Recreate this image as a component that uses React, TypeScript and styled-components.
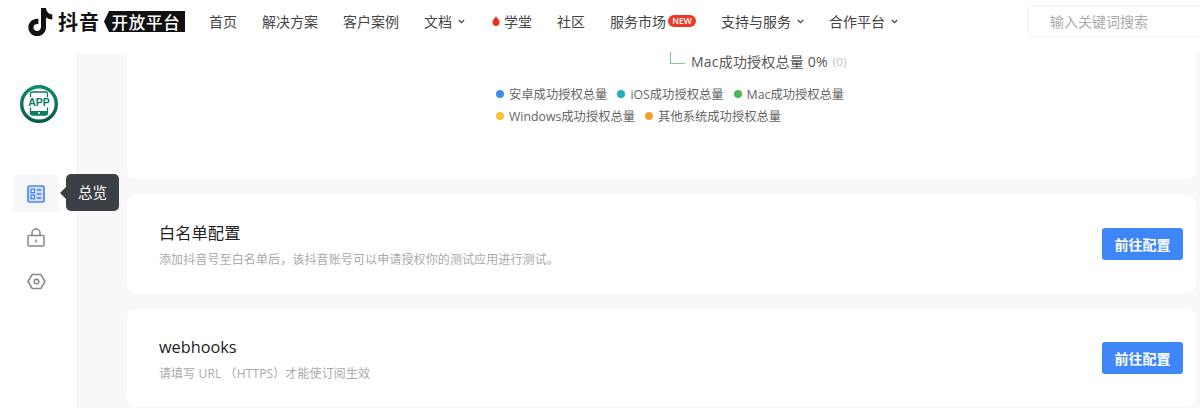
import styled, { createGlobalStyle } from "styled-components";

const GlobalStyle = createGlobalStyle`
  html, body {
    margin: 0;
    padding: 0;
    background: #fff;
    overflow: hidden;
  }
  * {
    box-sizing: border-box;
  }
`;

const FONT = `"Open Sans", "Noto Sans CJK SC", "Noto Sans", sans-serif`;

const navItems = [
  { label: "首页" },
  { label: "解决方案" },
  { label: "客户案例" },
  { label: "文档", arrow: true },
  { label: "学堂", flame: true },
  { label: "社区" },
  { label: "服务市场", badge: "NEW" },
  { label: "支持与服务", arrow: true },
  { label: "合作平台", arrow: true },
];

const legendRows = [
  [
    { color: "#3b8cf0", label: "安卓成功授权总量" },
    { color: "#22aebf", label: "iOS成功授权总量" },
    { color: "#4cb85c", label: "Mac成功授权总量" },
  ],
  [
    { color: "#f3c237", label: "Windows成功授权总量" },
    { color: "#f5a033", label: "其他系统成功授权总量" },
  ],
];

const DouyinMark = () => (
  <svg width="25" height="28" viewBox="0 0 25 28" aria-hidden="true">
    <path
      fill="#111"
      d="M13 0h5c.3 3.6 2.6 6 6.3 6.4v5c-2.400 0-4.500-.7-6.300-2v9.800c0 5.200-3.900 8.800-8.800 8.800C4.200 28 .4 24.200.4 19.400c0-5.300 4.500-9.300 10-8.500v5.200c-2.600-.7-5 1-5 3.400 0 2 1.700 3.500 3.800 3.500 2.200 0 3.800-1.500 3.800-3.900z"
    />
  </svg>
);

const Chevron = () => (
  <ChevronSvg width="7" height="5" viewBox="0 0 7 5" aria-hidden="true">
    <path d="M.8 1l2.700 2.700L6.200 1" fill="none" stroke="#444" strokeWidth="1.200" />
  </ChevronSvg>
);

const Flame = () => (
  <FlameSvg width="8" height="10" viewBox="0 0 8 10" aria-hidden="true">
    <path
      fill="#e8321f"
      d="M4 0c.4 1.600 3.600 3.400 3.600 6.200C7.600 8.400 6 10 4 10S.4 8.400.4 6.200C.4 3.800 3.400 2.200 4 0z"
    />
  </FlameSvg>
);

const AppLogo = () => (
  <svg width="38" height="38" viewBox="0 0 38 38" aria-hidden="true">
    <defs>
      <linearGradient id="appRing" x1="0" y1="0" x2="0" y2="1">
        <stop offset="0" stopColor="#0f8a6c" />
        <stop offset="1" stopColor="#075c49" />
      </linearGradient>
    </defs>
    <circle cx="19" cy="19" r="17.300" fill="#fff" stroke="url(#appRing)" strokeWidth="3.400" />
    <rect x="10.500" y="7" width="17" height="23" rx="1.800" fill="none" stroke="#0d7a62" strokeWidth="1.300" />
    <path d="M10.500 26h17v2.200a1.800 1.800 0 0 1-1.800 1.800H12.300a1.800 1.800 0 0 1-1.800-1.800z" fill="#0d7a62" />
    <circle cx="19" cy="28" r="1" fill="#fff" />
    <rect x="7.500" y="12" width="23" height="10.500" fill="#fff" />
    <text x="19" y="21" textAnchor="middle" fontSize="10.500" fontWeight="700" fontFamily="Liberation Sans, sans-serif" fill="#0d7a62">
      APP
    </text>
  </svg>
);

const OverviewIcon = () => (
  <svg width="18" height="18" viewBox="0 0 18 18" aria-hidden="true">
    <rect x="1" y="1" width="16" height="16" rx="1.500" fill="#cfe0fb" stroke="#4a8bec" strokeWidth="1.700" />
    <rect x="4" y="4.300" width="3.400" height="3.400" fill="#fff" stroke="#3f80e6" strokeWidth="1.300" />
    <rect x="4" y="10.300" width="3.400" height="3.400" fill="#fff" stroke="#3f80e6" strokeWidth="1.300" />
    <path d="M9.800 5h4.400M9.800 9h4.400M9.800 13h4.400" stroke="#3f80e6" strokeWidth="1.400" />
  </svg>
);

const LockIcon = () => (
  <svg width="18" height="19" viewBox="0 0 18 19" aria-hidden="true">
    <path d="M5 7.500V5a4 4 0 0 1 8 0v2.500" fill="none" stroke="#888" strokeWidth="1.500" />
    <rect x="1" y="7.500" width="16" height="10.500" rx="1.200" fill="none" stroke="#888" strokeWidth="1.500" />
    <path d="M9 11.500v3" stroke="#888" strokeWidth="1.500" />
  </svg>
);

const HexIcon = () => (
  <svg width="19" height="17" viewBox="0 0 19 17" aria-hidden="true">
    <path d="M5.200 1.500h8.600l4.200 7-4.200 7H5.200L1 8.500z" fill="none" stroke="#888" strokeWidth="1.500" strokeLinejoin="round" />
    <circle cx="9.500" cy="8.500" r="2.300" fill="none" stroke="#888" strokeWidth="1.500" />
  </svg>
);

const ConfigCard = ({ title, desc }: { title: string; desc: string }) => (
  <Card>
    <div>
      <CardTitle>{title}</CardTitle>
      <CardDesc>{desc}</CardDesc>
    </div>
    <PrimaryButton>前往配置</PrimaryButton>
  </Card>
);

export default function App() {
  return (
    <Page>
      <GlobalStyle />
      <Header>
        <Logo>
          <DouyinMark />
          <LogoName>抖音</LogoName>
          <LogoTag>开放平台</LogoTag>
        </Logo>
        <Nav>
          {navItems.map((item) => (
            <NavItem key={item.label}>
              {item.flame && <Flame />}
              {item.label}
              {item.badge && <NewBadge>{item.badge}</NewBadge>}
              {item.arrow && <Chevron />}
            </NavItem>
          ))}
        </Nav>
        <Search>输入关键词搜索</Search>
      </Header>
      <Body>
        <Sidebar>
          <AppLogo />
          <SideMenu>
            <SideItem $active>
              <OverviewIcon />
              <Tooltip>总览</Tooltip>
            </SideItem>
            <SideItem>
              <LockIcon />
            </SideItem>
            <SideItem>
              <HexIcon />
            </SideItem>
          </SideMenu>
        </Sidebar>
        <Content>
          <ChartCard>
            <ChartLabel>
              <LabelLine />
              Mac成功授权总量 0%
              <LabelCount>(0)</LabelCount>
            </ChartLabel>
            <Legend>
              {legendRows.map((row, i) => (
                <LegendRow key={i}>
                  {row.map((entry) => (
                    <LegendItem key={entry.label}>
                      <LegendDot $color={entry.color} />
                      {entry.label}
                    </LegendItem>
                  ))}
                </LegendRow>
              ))}
            </Legend>
          </ChartCard>
          <ConfigCard title="白名单配置" desc="添加抖音号至白名单后，该抖音账号可以申请授权你的测试应用进行测试。" />
          <ConfigCard title="webhooks" desc="请填写 URL （HTTPS）才能使订阅生效" />
        </Content>
      </Body>
    </Page>
  );
}

const Page = styled.div`
  width: 1200px;
  height: 408px;
  overflow: hidden;
  display: flex;
  flex-direction: column;
  background: #fff;
  font-family: ${FONT};
`;

const Header = styled.header`
  height: 53px;
  flex: none;
  display: flex;
  align-items: center;
  padding: 0 0 10px 28px;
  background: #fff;
`;

const Logo = styled.div`
  display: flex;
  align-items: center;
  width: 181px;
`;

const LogoName = styled.span`
  margin-left: 5px;
  font-size: 20px;
  font-weight: 700;
  letter-spacing: 1px;
  color: #111;
`;

const LogoTag = styled.span`
  margin-left: 4px;
  height: 21px;
  width: 81px;
  flex: none;
  display: flex;
  align-items: center;
  justify-content: center;
  padding-left: 3px;
  background: #111;
  color: #fff;
  font-size: 16.500px;
  font-weight: 500;
  letter-spacing: 0.700px;
  clip-path: polygon(5px 0, 100% 0, 100% 100%, 5px 100%, 0 50%);
`;

const Nav = styled.nav`
  display: flex;
  align-items: center;
  gap: 25px;
  width: 819px;
  margin-bottom: 2px;
`;

const NavItem = styled.div`
  display: flex;
  align-items: center;
  gap: 4px;
  font-size: 14px;
  color: #444;
  white-space: nowrap;
`;

const ChevronSvg = styled.svg`
  margin: 2px 0 0 2px;
`;

const FlameSvg = styled.svg`
  margin: 1px 0 0 2px;
`;

const NewBadge = styled.span`
  height: 12px;
  width: 28px;
  margin-left: -2px;
  display: flex;
  align-items: center;
  justify-content: center;
  border-radius: 6px;
  background: #ee3a24;
  color: #fff;
  font-size: 8.500px;
  font-weight: 600;
`;

const Search = styled.div`
  width: 172px;
  height: 32px;
  margin-bottom: 1px;
  padding-left: 21px;
  display: flex;
  align-items: center;
  border: 1px solid #f2f2f2;
  border-right: none;
  border-radius: 4px 0 0 4px;
  font-size: 14px;
  color: #aaa;
  white-space: nowrap;
`;

const Body = styled.div`
  flex: 1;
  display: flex;
  min-height: 0;
`;

const Sidebar = styled.aside`
  width: 78px;
  flex: none;
  padding: 32px 0 0 20px;
  background: #fff;
  border-right: 1px solid #f0f0f0;
`;

const SideMenu = styled.div`
  margin: 47px 0 0 -6px;
  display: flex;
  flex-direction: column;
  gap: 7px;
`;

const SideItem = styled.div<{ $active?: boolean }>`
  position: relative;
  width: 44px;
  height: 37px;
  display: flex;
  align-items: center;
  justify-content: center;
  border-radius: 3px;
  background: ${(p) => (p.$active ? "#f6f6f6" : "transparent")};
`;

const Tooltip = styled.div`
  position: absolute;
  left: 52px;
  top: -1px;
  width: 53px;
  height: 37px;
  padding-bottom: 2px;
  display: flex;
  align-items: center;
  justify-content: center;
  border-radius: 5px;
  background: #3c3f46;
  color: #fff;
  font-size: 14.500px;
  z-index: 2;

  &::before {
    content: "";
    position: absolute;
    left: -6px;
    top: 13px;
    border-style: solid;
    border-width: 6px 6px 6px 0;
    border-color: transparent #3c3f46 transparent transparent;
  }
`;

const Content = styled.main`
  flex: 1;
  min-width: 0;
  padding: 0 4px 0 49px;
  display: flex;
  flex-direction: column;
  gap: 16px;
  background: #f8f8f8;
`;

const ChartCard = styled.section`
  height: 126px;
  flex: none;
  display: flex;
  flex-direction: column;
  padding-left: 369px;
  background: #fff;
  border-radius: 0 0 10px 10px;
`;

const ChartLabel = styled.div`
  position: relative;
  margin-left: 195px;
  display: flex;
  align-items: center;
  height: 16px;
  font-size: 14px;
  letter-spacing: 0.200px;
  color: #555;
  white-space: nowrap;
`;

const LabelLine = styled.span`
  position: absolute;
  left: -21px;
  top: -1px;
  width: 15px;
  height: 12px;
  border-left: 1px solid #7ccb8b;
  border-bottom: 1px solid #7ccb8b;
`;

const LabelCount = styled.span`
  margin-left: 5px;
  font-size: 11.500px;
  color: #bbb;
`;

const Legend = styled.div`
  margin-top: 16px;
  display: flex;
  flex-direction: column;
  gap: 4px;
`;

const LegendRow = styled.div`
  display: flex;
  gap: 10px;
  height: 18px;
`;

const LegendItem = styled.div`
  display: flex;
  align-items: center;
  gap: 5px;
  font-size: 12.300px;
  color: #666;
  white-space: nowrap;
`;

const LegendDot = styled.span<{ $color: string }>`
  width: 8px;
  height: 8px;
  border-radius: 50%;
  background: ${(p) => p.$color};
`;

const Card = styled.section`
  height: 98px;
  flex: none;
  display: flex;
  align-items: center;
  justify-content: space-between;
  padding: 0 13px 0 32px;
  background: #fff;
  border-radius: 10px;
`;

const CardTitle = styled.div`
  font-size: 16.300px;
  line-height: 24px;
  color: #222;
`;

const CardDesc = styled.div`
  margin-top: 7px;
  font-size: 12px;
  letter-spacing: 0.120px;
  line-height: 16px;
  color: #aaa;
`;

const PrimaryButton = styled.button`
  width: 81px;
  height: 32px;
  border: none;
  border-radius: 3px;
  background: #3f86f8;
  color: #fff;
  font-family: inherit;
  font-size: 14px;
  font-weight: 700;
`;
